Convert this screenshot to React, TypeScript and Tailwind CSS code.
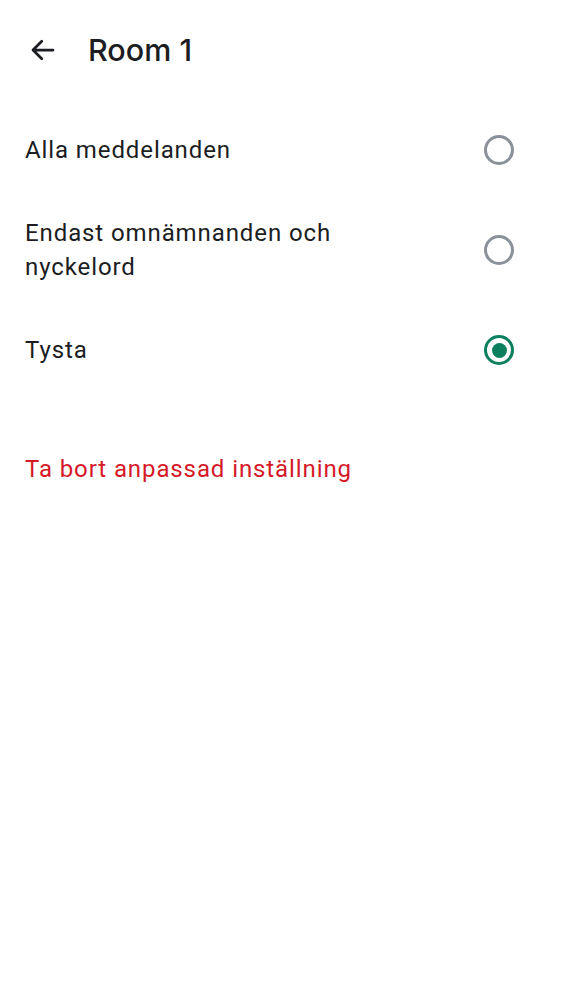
const OPTIONS = [
  { label: "Alla meddelanden", checked: false },
  { label: "Endast omnämnanden och nyckelord", checked: false },
  { label: "Tysta", checked: true },
];

function Radio({ checked }: { checked: boolean }) {
  return (
    <div
      className={`flex h-[30px] w-[30px] items-center justify-center rounded-full border-[3px] ${
        checked ? "border-[#0b7f5e]" : "border-[#8a9199]"
      }`}
    >
      {checked && <div className="h-[15px] w-[15px] rounded-full bg-[#0b7f5e]" />}
    </div>
  );
}

export default function App() {
  return (
    <div className="min-h-[1000px] w-full bg-white text-[#1b1d22]" style={{ fontFamily: "Roboto, sans-serif" }}>
      <div className="flex h-[100px] items-center px-[28px]">
        <svg width="30" height="30" viewBox="0 0 24 24" fill="none" stroke="#1b1d22" strokeWidth="2.2" strokeLinecap="round" strokeLinejoin="round">
          <path d="M20 12H4.5M11 5l-7 7 7 7" />
        </svg>
        <h1 className="ml-[30px] text-[30.5px] font-medium" style={{ fontFamily: "Inter, sans-serif" }}>
          Room 1
        </h1>
      </div>
      {OPTIONS.map((o) => (
        <div key={o.label} className="flex h-[100px] items-center pl-[25px] pr-[48px]">
          <p className="w-[350px] text-[24px] leading-[34px] tracking-[0.9px]">{o.label}</p>
          <div className="ml-auto">
            <Radio checked={o.checked} />
          </div>
        </div>
      ))}
      <p className="mt-[52px] px-[25px] text-[24px] leading-[34px] tracking-[0.9px] text-[#d51928]">
        Ta bort anpassad inställning
      </p>
    </div>
  );
}
